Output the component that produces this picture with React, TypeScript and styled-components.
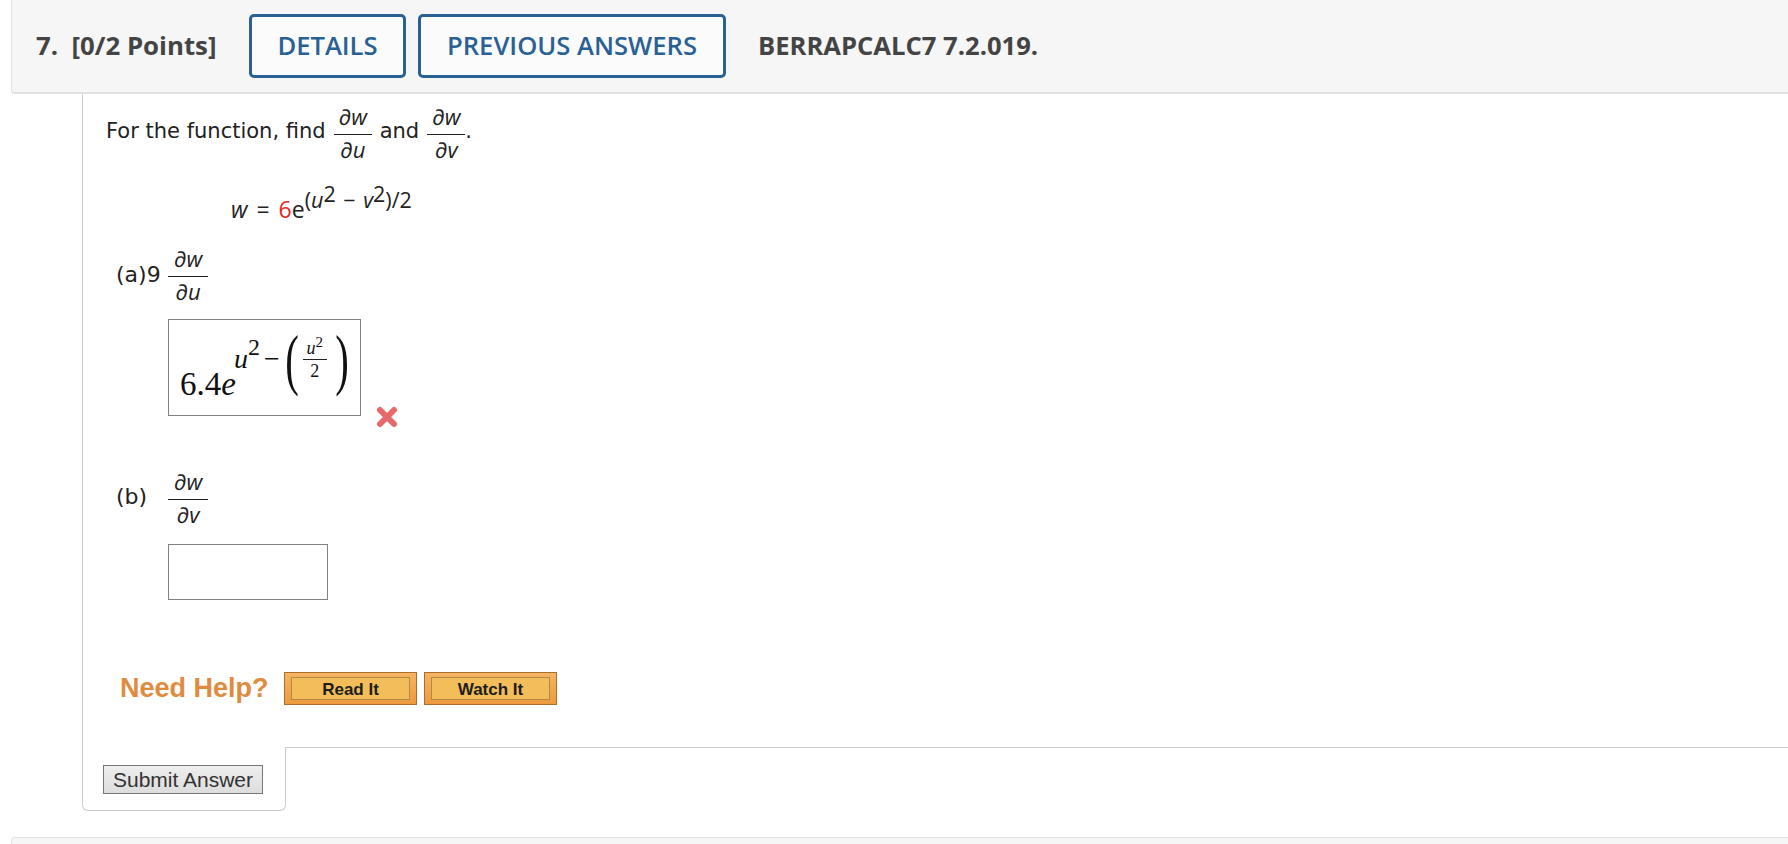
import React from "react";
import styled, { createGlobalStyle } from "styled-components";

const Global = createGlobalStyle`
  html, body { margin: 0; padding: 0; background: #fff; height: 844px; overflow: hidden; }
`;
const Page = styled.div`
  width: 1788px; height: 844px; overflow: hidden; padding-left: 11px; box-sizing: border-box;
  font-family: "DejaVu Sans", sans-serif; color: #222;
`;
const Header = styled.header`
  height: 94px; box-sizing: border-box; display: flex; align-items: center;
  background: #f6f6f6; border: 1px solid #e2e2e2; border-width: 0 0 2px 1px; border-radius: 0 0 0 4px;
  font-family: "Open Sans", sans-serif; font-weight: 600; color: #444;
  padding: 0 0 0 24px;
`;
const Points = styled.div` font-size: 25.8px; font-weight: 700; white-space: pre; width: 213px; margin-bottom: 2px; `;
const HeaderButton = styled.div<{ $w: number }>`
  width: ${p => p.$w}px; height: 64px; box-sizing: border-box; margin-right: 12px; padding-bottom: 2px;
  border: 3px solid #2a6195; border-radius: 5px; color: #2a6195; background: #fbfbfb;
  display: flex; align-items: center; justify-content: center; font-size: 25.6px; font-weight: 600;
`;
const Code = styled.div` font-size: 25.6px; font-weight: 700; margin: 0 0 2px 20px; color: #444; `;
const Content = styled.div`
  margin-left: 71px; border-left: 1px solid #ccc; height: 653px; box-sizing: border-box; padding-left: 23px;
`;
const Intro = styled.div` display: flex; align-items: center; height: 76px; font-size: 21px; padding-bottom: 2px; box-sizing: border-box; `;
const Frac = styled.span<{ $w?: number }>`
  display: inline-flex; flex-direction: column; align-items: center; margin: 2px 8px 0;
  width: ${p => p.$w ?? 38}px; font-family: "Open Sans", sans-serif; font-style: italic; font-size: 22px;
  & > span:first-child { border-bottom: 1.5px solid #222; width: 100%; text-align: center; line-height: 32px; padding-bottom: 2px; }
  & > span:last-child { line-height: 28px; padding-bottom: 2px; }
`;
const Period = styled.span` margin-left: -8px; `;
const Formula = styled.div`
  height: 66px; padding-left: 125px; font-family: "Open Sans", sans-serif; font-size: 23px; padding-top: 24px; box-sizing: border-box; line-height: 30px; word-spacing: 3px;
  i { font-style: italic; }
  b { color: #e8261c; font-weight: 400; }
  sup { font-size: 21.5px; line-height: 0; vertical-align: 10px; word-spacing: 2px; }
  sup sup { font-size: 21.5px; vertical-align: 6px; }
`;
const Part = styled.div`
  display: flex; align-items: center; font-size: 22px; height: 76px; margin-left: 10px;
`;
const PartLabel = styled.span` width: 52px; `;
const PartFrac = styled(Frac)` margin: 0; width: 40px; `;
const Answer = styled.div`
  margin: 7px 0 0 62px; width: 193px; height: 97px; box-sizing: border-box; border: 1px solid #808080;
  position: relative; font-family: "Liberation Serif", serif; font-size: 33px; padding: 46px 0 0 11px; color: #111;
  i { font-style: italic; }
`;
const ExpRow = styled.span`
  position: absolute; left: 65px; top: 5px; display: flex; align-items: center; font-size: 28px;
  i sup { font-size: 24px; line-height: 0; vertical-align: 13px; font-style: normal; }
`;
const Minus = styled.span` margin: 0 2px 0 4px; `;
const BigParen = styled.span` font-size: 68px; font-weight: 100; line-height: 68px; transform: scaleX(.6); width: 16px; display: inline-block; text-align: center; `;
const MiniFrac = styled.span`
  display: inline-flex; flex-direction: column; align-items: center; width: 24px; margin: 0 5px; font-size: 18px; line-height: 22px;
  & > span:first-child { border-bottom: 1px solid #222; width: 100%; text-align: center; }
  sup { font-size: 15px; line-height: 0; font-style: normal; }
`;
const AnswerRow = styled.div` display: flex; align-items: flex-end; `;
const Cross = styled.svg` margin: 0 0 -12px 14px; `;
const PartB = styled(Part)`
  margin-top: 42px;
  & > span:last-child { margin-top: 3px; }
`;
const Empty = styled.div`
  margin: 10px 0 0 62px; width: 160px; height: 56px; box-sizing: border-box; border: 1px solid #808080;
`;
const HelpRow = styled.div` display: flex; align-items: center; margin: 71px 0 0 14px; height: 34px; `;
const Help = styled.span`
  font-family: "Liberation Sans", sans-serif; font-weight: 700; font-size: 27px; color: #e08b3e; width: 164px;
`;
const HelpButton = styled.div`
  width: 133px; height: 33px; box-sizing: border-box; margin-right: 7px; border: 1px solid #a96f2e; background: linear-gradient(#f7b463, #ee9a3c); padding: 4px 6px;
  display: flex;
  & > span { flex: 1; background: #f3bd59; border: 1px solid #b08a48; display: flex; align-items: center; justify-content: center; padding-top: 3px;
    font: 700 17px "Liberation Sans", sans-serif; color: #1d1d1d; }
`;
const Footer = styled.div` display: flex; margin-left: 71px; height: 64px; box-sizing: border-box; `;
const SubmitTab = styled.div`
  width: 204px; height: 64px; box-sizing: border-box; border: 1px solid #ccc; border-top: 0; border-radius: 0 0 6px 6px; padding: 18px 0 0 20px;
`;
const Filler = styled.div` flex: 1; border-top: 1px solid #ccc; `;
const Submit = styled.button`
  width: 160px; height: 29px; box-sizing: border-box; border: 1px solid #777; border-radius: 0; padding: 0; background: linear-gradient(#eee, #ddd);
  font: 21px "Liberation Sans", sans-serif; color: #333;
`;
const NextHeader = styled.div`
  margin-top: 26px; height: 20px; background: #f6f6f6; border: 1px solid #e2e2e2; border-width: 1px 0 0 1px; border-radius: 4px 0 0 0;
`;

const Fraction = ({ top, bottom, as: C = Frac }: { top: string; bottom: string; as?: typeof Frac }) => (
  <C><span>{top}</span><span>{bottom}</span></C>
);

export default function App() {
  return (
    <Page>
      <Global />
      <Header>
        <Points>{"7.  [0/2 Points]"}</Points>
        <HeaderButton $w={157}>DETAILS</HeaderButton>
        <HeaderButton $w={308}>PREVIOUS ANSWERS</HeaderButton>
        <Code>BERRAPCALC7 7.2.019.</Code>
      </Header>
      <Content>
        <Intro>
          For the function, find <Fraction top="∂w" bottom="∂u" /> and <Fraction top="∂w" bottom="∂v" /><Period>.</Period>
        </Intro>
        <Formula>
          <i>w</i> = <b>6</b>e<sup>(<i>u</i><sup>2</sup> − <i>v</i><sup>2</sup>)/2</sup>
        </Formula>
        <Part>
          <PartLabel>(a)9</PartLabel>
          <Fraction as={PartFrac} top="∂w" bottom="∂u" />
        </Part>
        <AnswerRow>
          <Answer>
            6.4<i>e</i>
            <ExpRow>
              <i>u<sup>2</sup></i>
              <Minus>−</Minus>
              <BigParen>(</BigParen>
              <MiniFrac><span><i>u</i><sup>2</sup></span><span>2</span></MiniFrac>
              <BigParen>)</BigParen>
            </ExpRow>
          </Answer>
          <Cross width="24" height="22" viewBox="0 0 24 22">
            <path d="M5 4 L19 18 M19 4 L5 18" stroke="#e8696b" strokeWidth="6" strokeLinecap="round" fill="none" />
          </Cross>
        </AnswerRow>
        <PartB>
          <PartLabel>(b)</PartLabel>
          <Fraction as={PartFrac} top="∂w" bottom="∂v" />
        </PartB>
        <Empty />
        <HelpRow>
          <Help>Need Help?</Help>
          <HelpButton><span>Read It</span></HelpButton>
          <HelpButton><span>Watch It</span></HelpButton>
        </HelpRow>
      </Content>
      <Footer>
        <SubmitTab><Submit>Submit Answer</Submit></SubmitTab>
        <Filler />
      </Footer>
      <NextHeader />
    </Page>
  );
}
